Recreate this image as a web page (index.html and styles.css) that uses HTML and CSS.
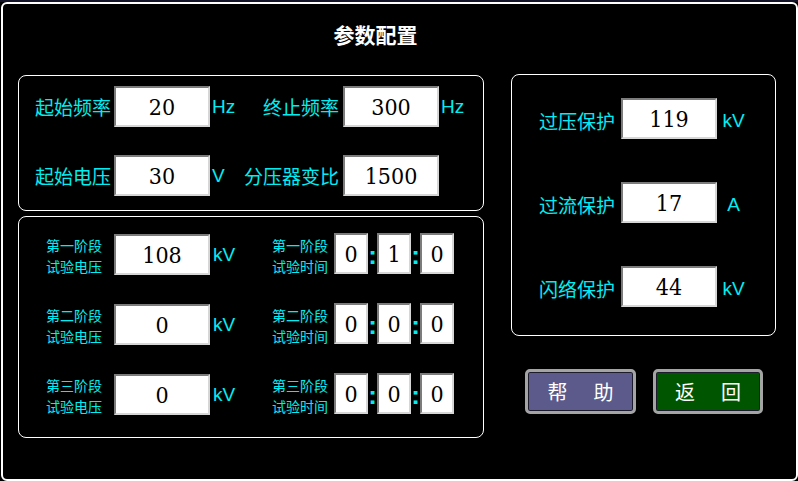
FILE: index.html
```html
<!DOCTYPE html>
<html lang="zh-CN">
<head>
<meta charset="utf-8">
<title>参数配置</title>
<link rel="stylesheet" href="styles.css">
</head>
<body>
<div class="topline"></div>
<div class="frame">
  <h1 class="title">参数配置</h1>
  <div class="main">
    <div class="leftcol">
      <section class="panel panel-freq">
        <span class="lbl">起始频率</span>
        <span class="field">20</span>
        <span class="unit">Hz</span>
        <span class="lbl lbl2">终止频率</span>
        <span class="field">300</span>
        <span class="unit">Hz</span>

        <span class="lbl">起始电压</span>
        <span class="field">30</span>
        <span class="unit">V</span>
        <span class="lbl lbl2">分压器变比</span>
        <span class="field">1500</span>
        <span class="unit"></span>
      </section>

      <section class="panel panel-stage">
        <span class="slbl">第一阶段<br>试验电压</span>
        <span class="field">108</span>
        <span class="unit">kV</span>
        <span class="slbl slbl2">第一阶段<br>试验时间</span>
        <span class="time"><span class="tbox">0</span><span class="colon">:</span><span class="tbox">1</span><span class="colon">:</span><span class="tbox">0</span></span>

        <span class="slbl">第二阶段<br>试验电压</span>
        <span class="field">0</span>
        <span class="unit">kV</span>
        <span class="slbl slbl2">第二阶段<br>试验时间</span>
        <span class="time"><span class="tbox">0</span><span class="colon">:</span><span class="tbox">0</span><span class="colon">:</span><span class="tbox">0</span></span>

        <span class="slbl">第三阶段<br>试验电压</span>
        <span class="field">0</span>
        <span class="unit">kV</span>
        <span class="slbl slbl2">第三阶段<br>试验时间</span>
        <span class="time"><span class="tbox">0</span><span class="colon">:</span><span class="tbox">0</span><span class="colon">:</span><span class="tbox">0</span></span>
      </section>
    </div>

    <div class="rightcol">
      <section class="panel panel-prot">
        <span class="lbl">过压保护</span>
        <span class="field">119</span>
        <span class="unit">kV</span>

        <span class="lbl">过流保护</span>
        <span class="field">17</span>
        <span class="unit">A</span>

        <span class="lbl">闪络保护</span>
        <span class="field">44</span>
        <span class="unit">kV</span>
      </section>
      <div class="buttons">
        <button class="btn btn-help"><span>帮</span><span>助</span></button>
        <button class="btn btn-back"><span>返</span><span>回</span></button>
      </div>
    </div>
  </div>
</div>
</body>
</html>
```

FILE: styles.css
```css
* { box-sizing: border-box; }

html, body {
  margin: 0;
  padding: 0;
  background: #000;
  width: 798px;
  height: 481px;
  overflow: hidden;
  font-family: "Noto Sans CJK SC", "Liberation Sans", sans-serif;
}

.topline {
  height: 2px;
  background: #14142a;
}

.frame {
  margin-left: 1px;
  width: 797px;
  height: 479px;
  border: 2px solid #fff;
  border-radius: 6px;
  padding-top: 16px;
}

.title {
  margin: 0;
  height: 28px;
  line-height: 28px;
  font-size: 21px;
  font-weight: bold;
  color: #fff;
  text-align: center;
  padding-right: 48px;
}

.main {
  display: flex;
  margin-top: 26px;
  padding-left: 15px;
  gap: 27px;
}

.leftcol {
  width: 466px;
  display: flex;
  flex-direction: column;
  gap: 5px;
  padding-top: 1px;
}

.rightcol {
  width: 265px;
}

.panel {
  border: 1px solid #fff;
  border-radius: 8px;
  display: grid;
  align-items: center;
}

.panel-freq {
  height: 136px;
  grid-template-columns: 95px 96px 32px 101px 96px 1fr;
  grid-template-rows: 41px 41px;
  row-gap: 28px;
  padding: 10px 0 14px 0;
}

.panel-stage {
  height: 222px;
  grid-template-columns: 95px 96px 62px 62px 1fr;
  grid-template-rows: 41px 41px 41px;
  row-gap: 29px;
  padding: 17px 0 22px 0;
}

.panel-prot {
  height: 262px;
  grid-template-columns: 109px 96px 30px;
  grid-template-rows: 41px 41px 41px;
  row-gap: 43px;
  padding: 23px 0 28px 0;
}

.lbl {
  color: #00eef2;
  font-size: 19px;
  line-height: 24px;
  justify-self: end;
  padding-right: 3px;
  white-space: nowrap;
}
.lbl2 { padding-right: 4px; }
.panel-prot .lbl { padding-right: 6px; padding-top: 4px; }

.slbl {
  color: #00eef2;
  font-size: 14px;
  line-height: 21px;
  justify-self: end;
  padding-right: 12px;
  padding-top: 2px;
  white-space: nowrap;
}
.slbl2 {
  justify-self: start;
  padding-right: 0;
}

.field, .tbox {
  height: 41px;
  background: #fff;
  border-style: solid;
  border-width: 2px;
  border-color: #7c7c7c #d6d6d6 #d6d6d6 #7c7c7c;
  color: #000;
  font-family: "DejaVu Serif", serif;
  font-stretch: condensed;
  font-size: 23px;
  line-height: 35px;
  padding-top: 2px;
  text-align: center;
}

.unit {
  color: #00eef2;
  font-family: Arial, "Liberation Sans", sans-serif;
  font-size: 19px;
  padding-left: 2px;
}
.panel-stage .unit { padding-left: 3px; }
.panel-prot .unit { padding-left: 3px; padding-top: 4px; text-align: center; }

.time {
  display: flex;
  align-items: stretch;
}

.tbox { width: 34px; }

.colon {
  width: 9px;
  color: #00eef2;
  font-family: Arial, "Liberation Sans", sans-serif;
  font-weight: bold;
  font-size: 26px;
  line-height: 41px;
  padding-top: 2px;
  text-align: center;
}

.buttons {
  display: flex;
  gap: 17px;
  margin-top: 33px;
  padding-left: 14px;
}

.btn {
  width: 111px;
  height: 45px;
  border: 3px solid #a4a4a4;
  border-radius: 5px;
  box-shadow: inset 0 0 0 1px #1c1c2c;
  color: #fff;
  font-family: "Noto Sans CJK SC", sans-serif;
  font-size: 20px;
  display: flex;
  align-items: center;
  justify-content: center;
  gap: 26px;
  padding: 0;
  cursor: pointer;
}
.btn-help { background: #5b5a8a; }
.btn-back { background: #005600; width: 110px; }
```
